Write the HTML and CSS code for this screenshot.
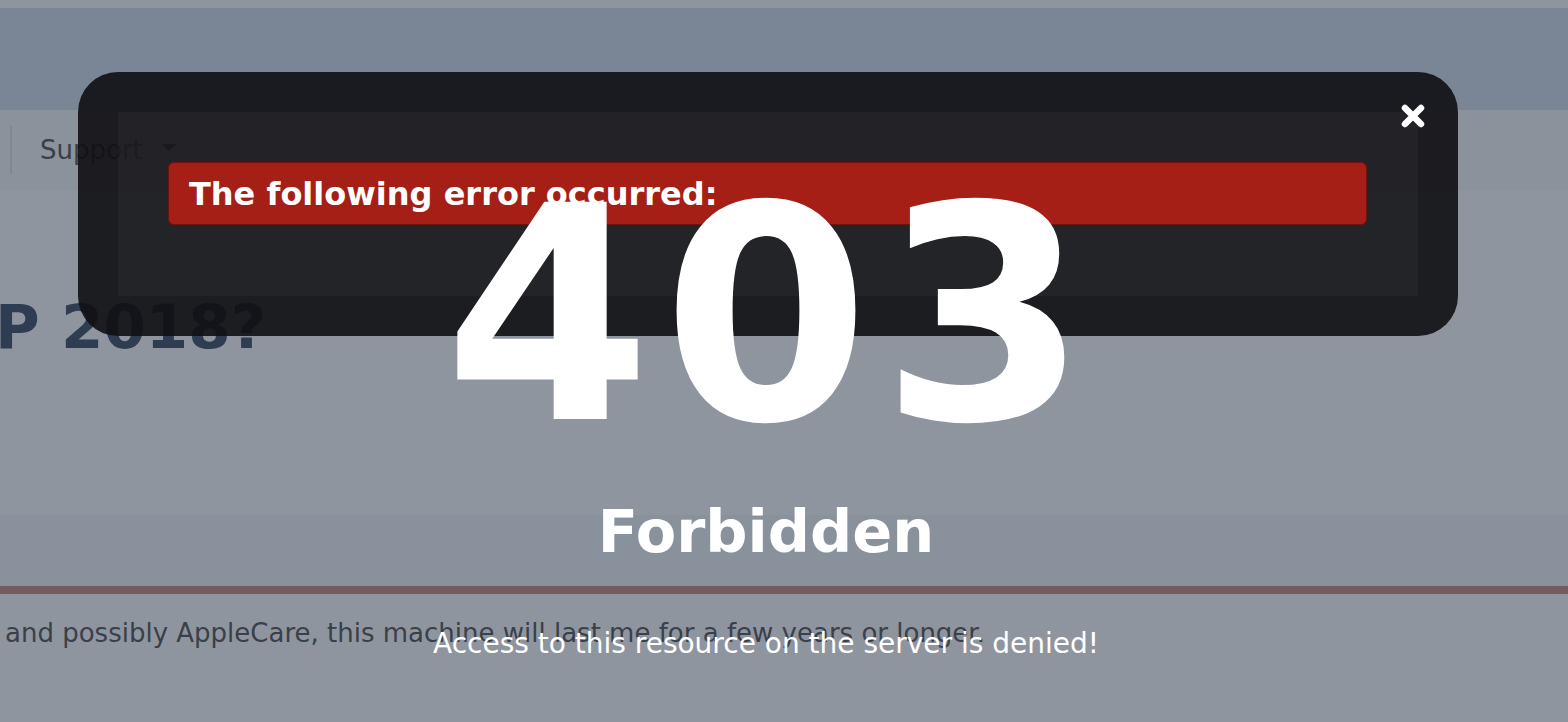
FILE: index.html
```html
<!DOCTYPE html>
<html lang="en">
<head>
<meta charset="UTF-8">
<title>403 Forbidden</title>
<link rel="stylesheet" href="styles.css">
</head>
<body>
<div class="page">
  <div class="topline"></div>
  <div class="header"></div>
  <div class="nav">
    <span class="sep"></span>
    <span class="nav-item">Support <span class="caret"></span></span>
  </div>
  <div class="content">
    <h1 class="title">P 2018?</h1>
  </div>
  <div class="band"></div>
  <div class="rule"></div>
  <div class="post">and possibly AppleCare, this machine will last me for a few years or longer.</div>
</div>

<div class="modal">
  <div class="modal-inner">
    <div class="error-bar">The following error occurred:</div>
  </div>
  <svg class="close" width="26" height="26" viewBox="0 0 26 26">
    <path d="M5 5 L21 21 M21 5 L5 21" stroke="#fff" stroke-width="6.5" stroke-linecap="round"/>
  </svg>
</div>

<div class="message">
  <div class="code">403</div>
  <div class="status">Forbidden</div>
  <div class="note">Access to this resource on the server is denied!</div>
</div>
</body>
</html>
```

FILE: styles.css
```css
body { margin: 0; font-family: "DejaVu Sans", Verdana, sans-serif; background: #8f959f; overflow: hidden; }
.page { width: 1568px; }
.topline { height: 8px; background: #8e959f; }
.header { height: 102px; background: #7a8696; }
.nav { height: 80px; background: #8a929c; display: flex; align-items: center; }
.sep { width: 2px; height: 48px; background: #7f8896; margin-left: 10px; }
.nav-item { margin-left: 28px; font-size: 26px; color: #3a3f47; display: flex; align-items: center; gap: 19px; }
.caret { width: 0; height: 0; border-left: 7px solid transparent; border-right: 7px solid transparent; border-top: 7px solid #2c3038; margin-top: -6px; }
.content { height: 325px; background: #8f959f; overflow: hidden; }
.title { margin: 107px 0 0 -5px; font-size: 61px; line-height: 60px; font-weight: bold; color: #2f3d52; }
.band { height: 71px; background: #89929c; }
.rule { height: 8px; background: #735c5c; }
.post { padding: 23px 0 0 5px; font-size: 26px; line-height: 32px; color: #3a4049; white-space: nowrap; }

.modal { position: absolute; left: 78px; top: 72px; width: 1380px; height: 264px; background: rgba(16, 16, 19, 0.9); border-radius: 40px; padding: 40px; box-sizing: border-box; }
.modal-inner { background: rgba(255, 255, 255, 0.03); height: 184px; padding: 50px 51px 0 50px; box-sizing: border-box; }
.error-bar { background: #a51f16; border: 1px solid #6e140e; border-radius: 6px; padding: 15px 20px 14px; font-size: 32px; line-height: 32px; font-weight: bold; color: #fff; }
.close { position: absolute; right: 32px; top: 31px; }

.message { position: absolute; left: 0; top: 166px; width: 1532px; text-align: center; color: #fff; }
.code { font-size: 298px; line-height: 300px; font-weight: bold; letter-spacing: 11px; text-indent: 11px; }
.status { margin-top: 36px; font-size: 59px; line-height: 60px; font-weight: bold; }
.note { margin-top: 68px; font-size: 28px; line-height: 28px; }
```
